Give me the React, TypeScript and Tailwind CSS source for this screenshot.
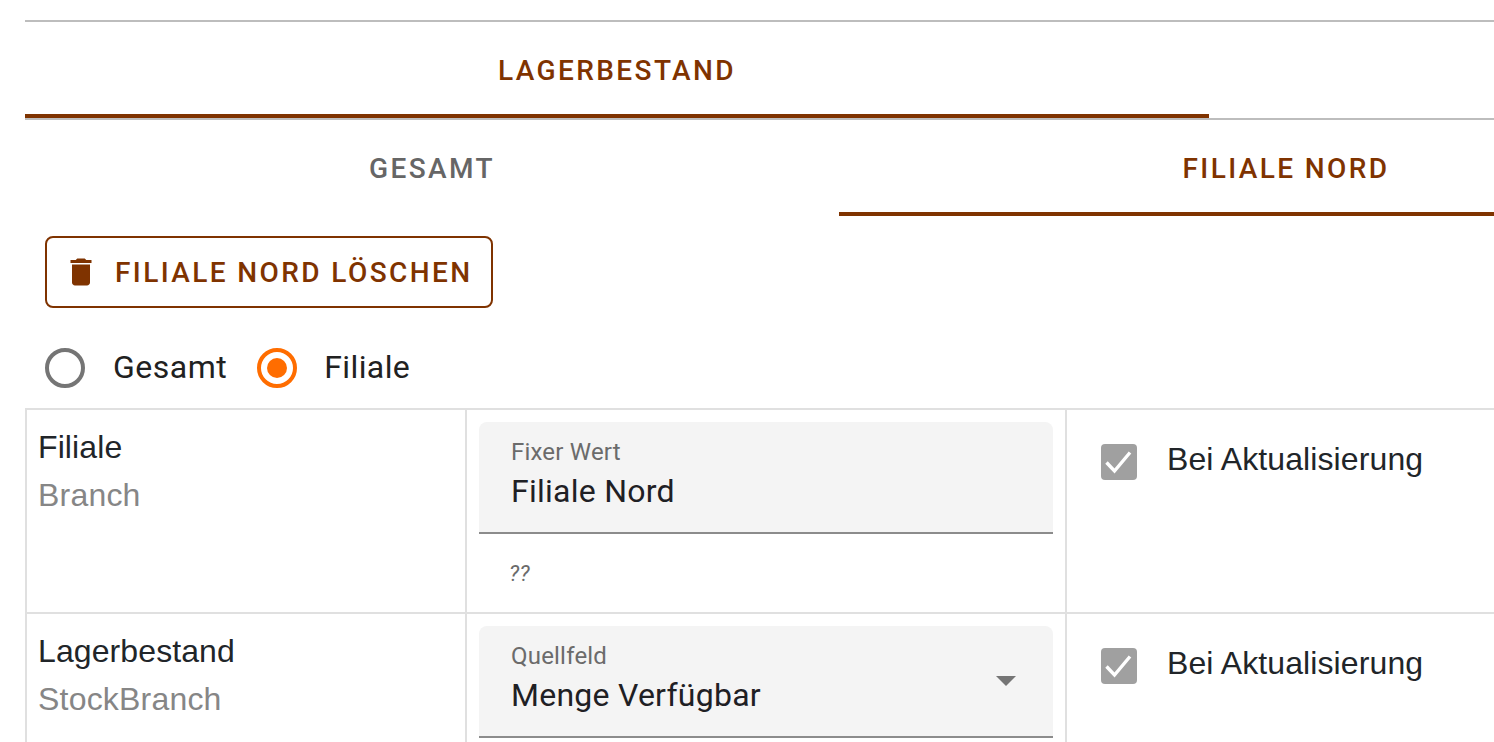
import React from "react";

const roboto = "font-['Roboto',sans-serif]";
const helv = "font-['Liberation_Sans',Arial,sans-serif]";

function Check() {
  return (
    <div className="w-9 h-9 rounded-[4px] bg-[#a0a0a0] flex items-center justify-center shrink-0 mt-[2px]">
      <svg width="36" height="36" viewBox="0 0 36 36" fill="none">
        <path d="M5.5 18.5 L13.5 27 L29 8.5" stroke="#fff" strokeWidth="3.4" />
      </svg>
    </div>
  );
}

function Row({
  title,
  sub,
  label,
  value,
  select,
  hint,
  rowH,
}: {
  title: string;
  sub: string;
  label: string;
  value: string;
  select?: boolean;
  hint?: string;
  rowH: string;
}) {
  return (
    <div className={`flex border-t-2 border-[#e0e0e0] ${rowH}`}>
      <div className="w-[440px] shrink-0 border-l-2 border-[#e0e0e0] pl-[11px] pt-[17px]">
        <div className={`${helv} text-[32px] leading-[40px] tracking-[0.1px] text-[#212529]`}>{title}</div>
        <div className={`${helv} text-[32px] leading-[40px] mt-[8px] tracking-[0.2px] text-[#868686]`}>{sub}</div>
      </div>
      <div className="w-[600px] shrink-0 border-l-2 border-[#e0e0e0] pl-[12px] pr-[12px] pt-[12px]">
        <div className="relative h-[112px] bg-[#f4f4f4] rounded-t-[8px] border-b-2 border-[#8c8c8c] pl-[32px] pt-[16px]">
          <div className={`${roboto} text-[24px] leading-[28px] tracking-[0.2px] text-[#6b6b6b]`}>{label}</div>
          <div className={`${roboto} text-[32px] leading-[40px] mt-[5px] tracking-[0.25px] text-[#1f2024]`}>{value}</div>
          {select && (
            <svg className="absolute right-[37px] top-[50px]" width="20" height="12" viewBox="0 0 20 12">
              <path d="M0 0H20L10 10Z" fill="#757575" />
            </svg>
          )}
        </div>
        {hint && (
          <div className={`${roboto} italic text-[22px] leading-[24px] tracking-[0.3px] text-[#6b6b6b] pl-[30px] pt-[28px]`}>{hint}</div>
        )}
      </div>
      <div className="flex-1 border-l-2 border-[#e0e0e0] pl-[34px] pt-[32px] flex items-start gap-[30px]">
        <Check />
        <div className={`${helv} text-[32px] leading-[40px] -mt-[3px] tracking-[0.1px] text-[#212529] whitespace-nowrap`}>
          Bei Aktualisierung
        </div>
      </div>
    </div>
  );
}

export default function App() {
  return (
    <div className="w-[1494px] h-[742px] overflow-hidden bg-white pl-[25px] pt-[20px]">
      <div className="w-[1469px] border-t-2 border-[#bdbdbd]">
        <div className="flex border-b-2 border-[#bdbdbd] h-[98px]">
          <div className="w-[1184px] h-[96px] border-b-4 border-[#7f3300] flex items-center justify-center">
            <span className={`${roboto} font-medium text-[28px] tracking-[2.4px] text-[#7f3300] mt-[6px]`}>LAGERBESTAND</span>
          </div>
        </div>
      </div>
      <div className="flex w-[1708px] h-[96px]">
        <div className="w-[814px] flex items-center justify-center">
          <span className={`${roboto} font-medium text-[28px] tracking-[2.4px] text-[#666666] mt-[2px]`}>GESAMT</span>
        </div>
        <div className="w-[894px] border-b-4 border-[#7f3300] flex items-center justify-center">
          <span className={`${roboto} font-medium text-[28px] tracking-[2.4px] text-[#7f3300] mt-[6px]`}>FILIALE NORD</span>
        </div>
      </div>
      <div className="pl-[20px] pt-[20px]">
        <div className="w-[448px] h-[72px] border-2 border-[#7f3300] rounded-[8px] flex items-center pl-[16px]">
          <svg width="36" height="36" viewBox="0 0 24 24" className="shrink-0">
            <path
              d="M6 19c0 1.100.9 2 2 2h8c1.100 0 2-.9 2-2V7H6v12zM19 4h-3.500l-1-1h-5l-1 1H5v2h14V4z"
              fill="#7f3300"
            />
          </svg>
          <span className={`${roboto} font-medium text-[28px] tracking-[2.4px] text-[#7f3300] ml-[16px] mt-[2px] whitespace-nowrap`}>
            FILIALE NORD LÖSCHEN
          </span>
        </div>
        <div className="flex items-center h-[40px] mt-[40px]">
          <div className="w-10 h-10 rounded-full border-[4px] border-[#757575]" />
          <span className={`${roboto} text-[32px] tracking-[0.5px] text-[#212121] ml-[28px] -mt-[3px]`}>Gesamt</span>
          <div className="w-10 h-10 rounded-full border-[4px] border-[#ff6d00] flex items-center justify-center ml-[30px]">
            <div className="w-5 h-5 rounded-full bg-[#ff6d00]" />
          </div>
          <span className={`${roboto} text-[32px] tracking-[0.4px] text-[#212121] ml-[27px] -mt-[3px]`}>Filiale</span>
        </div>
      </div>
      <div className="mt-[20px] w-[1469px]">
        <Row title="Filiale" sub="Branch" label="Fixer Wert" value="Filiale Nord" hint="??" rowH="h-[204px]" />
        <Row title="Lagerbestand" sub="StockBranch" label="Quellfeld" value="Menge Verfügbar" select rowH="h-[130px]" />
      </div>
    </div>
  );
}
